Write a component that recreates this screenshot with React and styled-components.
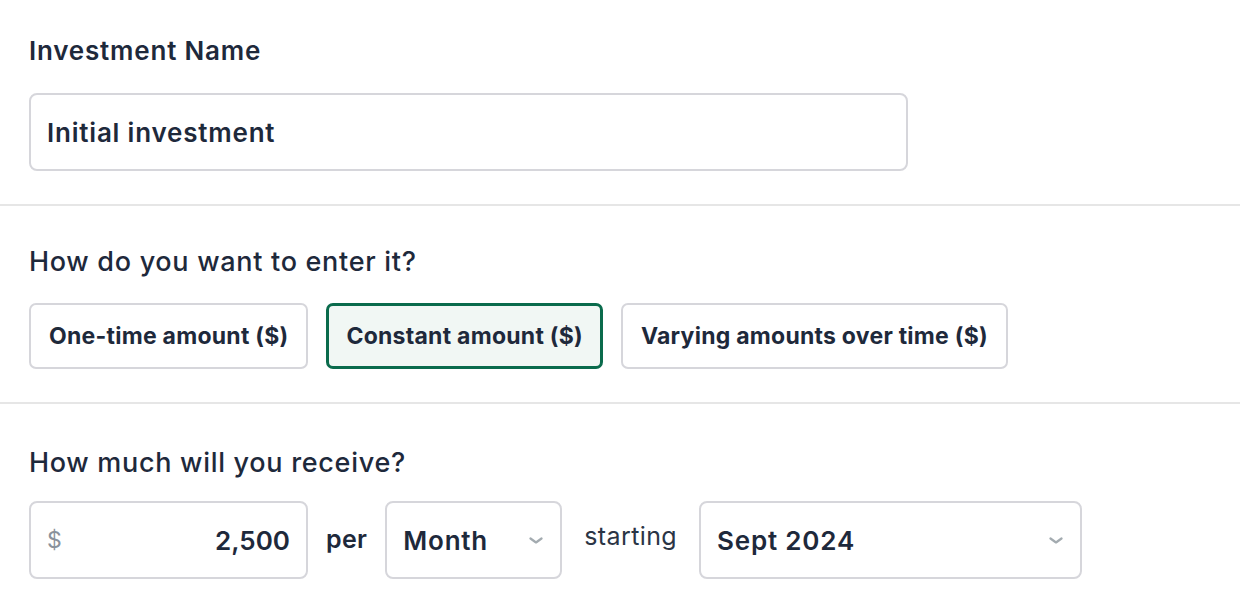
import styled, { createGlobalStyle } from "styled-components"

const GlobalStyle = createGlobalStyle`
  body {
    margin: 0;
    background: #ffffff;
    font-family: Inter, "Noto Sans", sans-serif;
    color: #1e293b;
  }
`

const Form = styled.div`
  width: 1240px;
`

const Section = styled.section`
  padding: ${(p) => p.$pad};
  border-bottom: ${(p) => (p.$last ? "none" : "2px solid #e6e6e6")};
`

const Label = styled.div`
  font-size: ${(p) => (p.$bold ? "26px" : "27px")};
  font-weight: ${(p) => (p.$bold ? 600 : 500)};
  letter-spacing: ${(p) => (p.$bold ? "0.8px" : "0.7px")};
  line-height: 32px;
  margin-bottom: ${(p) => p.$gap || "26px"};
`

const Box = styled.div`
  box-sizing: border-box;
  display: flex;
  align-items: center;
  width: ${(p) => p.$width};
  height: 78px;
  padding: 0 16px;
  border: 2px solid #d6d6db;
  border-radius: 8px;
  background: #fff;
  font-size: 26px;
  font-weight: 600;
  letter-spacing: 0.8px;
`

const Options = styled.div`
  display: flex;
  gap: 18px;
`

const Option = styled.button`
  box-sizing: border-box;
  height: 66px;
  padding: 0 ${(p) => (p.$active ? "17px" : "18px")};
  border: ${(p) => (p.$active ? "3px solid #0a6b4c" : "2px solid #d6d6db")};
  border-radius: 7px;
  background: ${(p) => (p.$active ? "#f1f7f4" : "#fff")};
  font-family: inherit;
  font-size: 23px;
  font-weight: 700;
  letter-spacing: 0.25px;
  color: #1e293b;
  cursor: pointer;
`

const Row = styled.div`
  display: flex;
  align-items: center;
`

const Currency = styled.span`
  color: #8a929c;
  font-weight: 400;
  font-size: 23px;
`

const Amount = styled.span`
  margin-left: auto;
  font-weight: 600;
  letter-spacing: 0;
`

const Word = styled.span`
  font-size: 25px;
  font-weight: ${(p) => (p.$light ? 400 : 600)};
  letter-spacing: ${(p) => (p.$light ? "0.4px" : "0.3px")};
  margin: 0 ${(p) => p.$space};
  transform: translateY(${(p) => (p.$light ? "-4px" : "-1px")});
  color: ${(p) => (p.$light ? "#2b3545" : "#1e293b")};
`

const Chevron = styled.svg`
  margin-left: auto;
  margin-right: 1px;
  flex: none;
`

const Caret = () => (
  <Chevron width="14" height="7" viewBox="0 0 14 7">
    <path d="M1.5 1.5 L7 5.5 L12.5 1.5" fill="none" stroke="#a3abb0" strokeWidth="2.2" strokeLinecap="round" strokeLinejoin="round" />
  </Chevron>
)

export default function App() {
  return (
    <Form>
      <GlobalStyle />
      <Section $pad="35px 29px 33px">
        <Label $bold>Investment Name</Label>
        <Box $width="879px">Initial investment</Box>
      </Section>

      <Section $pad="40px 29px 33px">
        <Label $gap="25px">How do you want to enter it?</Label>
        <Options>
          <Option>One-time amount ($)</Option>
          <Option $active>Constant amount ($)</Option>
          <Option>Varying amounts over time ($)</Option>
        </Options>
      </Section>

      <Section $pad="43px 29px 30px" $last>
        <Label $gap="22px">How much will you receive?</Label>
        <Row>
          <Box $width="279px">
            <Currency>$</Currency>
            <Amount>2,500</Amount>
          </Box>
          <Word $space="18px">per</Word>
          <Box $width="177px">
            Month
            <Caret />
          </Box>
          <Word $light $space="22px">starting</Word>
          <Box $width="383px">
            Sept 2024
            <Caret />
          </Box>
        </Row>
      </Section>
    </Form>
  )
}
